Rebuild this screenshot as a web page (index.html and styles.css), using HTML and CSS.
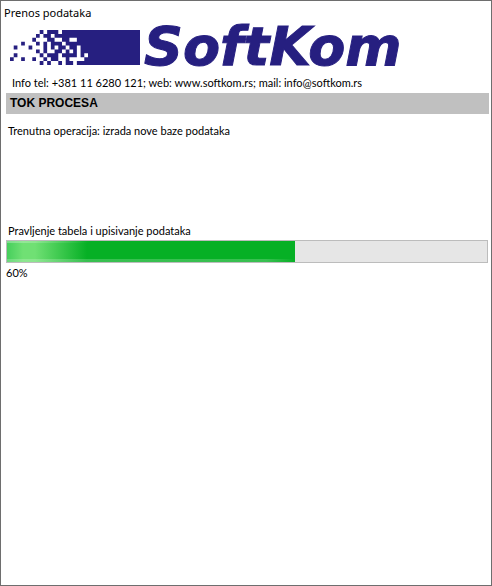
FILE: index.html
```
<!DOCTYPE html>
<html lang="sr-Latn">
<head>
<meta charset="UTF-8">
<meta name="viewport" content="width=device-width, initial-scale=1">
<title>Prenos podataka</title>
<link rel="stylesheet" href="styles.css">
</head>
<body>

<div class="window">
  <div class="titlebar">Prenos podataka</div>

  <div class="logo">
    <svg class="mosaic" viewBox="0 0 35 9" preserveAspectRatio="none" aria-hidden="true">
      <path class="block" d="M14 0h21v9H14z"/>
      <!-- loose squares on the left -->
      <path class="block" d="M8 0h1v1h-1zM10 0h3v1h-3zM7 1h1v1h-1zM9 1h2v1h-2zM12 1h2v1h-2zM6 2h1v1h-1zM10 2h2v1h-2zM3 3h1v1h-1zM7 3h1v1h-1zM9 3h1v1h-1zM11 3h3v1h-3zM1 4h1v1h-1zM5 4h1v1h-1zM9 4h1v2h-1zM11 4h1v1h-1zM13 4h1v1h-1zM7 5h1v1h-1zM12 5h2v1h-2zM1 6h1v1h-1zM8 6h1v1h-1zM10 6h3v1h-3zM0 7h1v1h-1zM3 7h1v1h-1zM6 7h1v1h-1zM9 7h1v1h-1zM11 7h2v1h-2zM8 8h1v1h-1zM10 8h1v1h-1zM13 8h1v1h-1z"/>
      <!-- gaps eaten into the block -->
      <path class="gap" d="M16 2h2v1h-2zM14 3h1v1h-1zM15 4h1v1h-1zM18 4h1v4h-1zM14 5h1v1h-1zM16 5h1v1h-1zM20 6h1v1h-1zM14 7h1v1h-1zM16 7h2v1h-2zM19 7h1v1h-1zM14 8h1v1h-1zM17 8h1v1h-1z"/>
    </svg>
    <span class="wordmark">SoftKom</span>
  </div>

  <p class="contact">Info tel: +381 11 6280 121; web: www.softkom.rs; mail: info@softkom.rs</p>

  <h1 class="section-title">TOK PROCESA</h1>
  <p class="operation">Trenutna operacija: izrada nove baze podataka</p>

  <div class="task">
    <div id="taskLabel" class="task-label">Pravljenje tabela i upisivanje podataka</div>
    <div class="progress" role="progressbar" aria-labelledby="taskLabel" aria-valuemin="0" aria-valuemax="100" aria-valuenow="60">
      <div class="progress-fill" style="width: 60%"></div>
    </div>
    <div class="percent">60%</div>
  </div>
</div>

</body>
</html>
```

FILE: styles.css
```
* {
  box-sizing: border-box;
}

body {
  margin: 0;
  background-color: #ffffff;
  color: #000000;
  font-family: Lato, "Liberation Sans", sans-serif;
  font-size: 11px;
  line-height: 14px;
}

.window {
  min-height: 100vh;
  border: 1px solid #6e6e6e;
  padding: 4px 2px 4px 5px;
}

.titlebar {
  margin-left: -2px;
  font-family: "Noto Sans", "Open Sans", sans-serif;
  line-height: 16px;
}

/* Logo: mosaic block and the name */
.logo {
  display: flex;
  align-items: center;
  gap: 4px;
  height: 44px;
  margin-top: 4px;
  padding-left: 4px;
}

.mosaic {
  width: 130px;
  height: 35px;
  flex: none;
}

.block {
  fill: #261f80;
}

.gap {
  fill: #ffffff;
}

.wordmark {
  color: #261f80;
  font-family: "DejaVu Sans", sans-serif;
  font-size: 54px;
  font-style: italic;
  font-weight: bold;
  line-height: 44px;
  -webkit-text-stroke: 1px #261f80;
}

.contact {
  margin: 7px 0 3px;
  padding-left: 6px;
}

.section-title {
  margin: 0;
  padding: 0 4px;
  background-color: #c0c0c0;
  font-family: "Liberation Sans", Arial, sans-serif;
  font-size: 12px;
  line-height: 21px;
}

.operation {
  margin: 10px 0 0;
  padding-left: 2px;
}

.task {
  margin-top: 86px;
}

.task-label {
  padding-left: 2px;
}

.progress {
  height: 23px;
  margin: 2px 1px 3px 0;
  border: 1px solid #bcbcbc;
  background-color: #e6e6e6;
}

/* light sweep on the left, thin gloss along the top and bottom */
.progress-fill {
  height: 100%;
  background:
    linear-gradient(to right, rgba(255, 255, 255, 0.3), rgba(255, 255, 255, 0) 84px) top / 100% 2px no-repeat,
    linear-gradient(to right, rgba(255, 255, 255, 0.2) 90%, rgba(255, 255, 255, 0)) bottom / 100% 3px no-repeat,
    linear-gradient(to right, #46cf5c 0, #70e074 16px, #70e074 28px, #06b025 80px);
}
```
